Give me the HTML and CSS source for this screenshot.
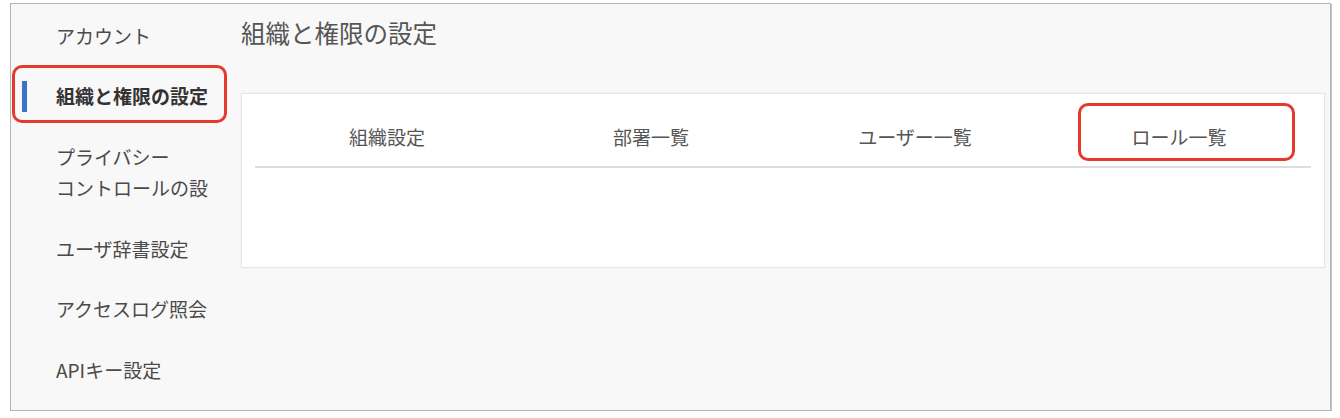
FILE: index.html
```html
<!DOCTYPE html>
<html lang="ja">
<head>
<meta charset="utf-8">
<title>組織と権限の設定</title>
<link rel="stylesheet" href="styles.css">
</head>
<body>
<div class="frame">
  <nav class="sidebar">
    <div class="nav-item">アカウント</div>
    <div class="nav-item active">組織と権限の設定</div>
    <div class="nav-item">プライバシー<br>コントロールの設</div>
    <div class="nav-item">ユーザ辞書設定</div>
    <div class="nav-item">アクセスログ照会</div>
    <div class="nav-item">APIキー設定</div>
  </nav>
  <main class="main">
    <h1 class="title">組織と権限の設定</h1>
    <section class="card">
      <div class="tabs">
        <div class="tab">組織設定</div>
        <div class="tab">部署一覧</div>
        <div class="tab">ユーザー一覧</div>
        <div class="tab marked">ロール一覧</div>
      </div>
    </section>
  </main>
</div>
</body>
</html>
```

FILE: styles.css
```css
* { box-sizing: border-box; }

html, body {
  margin: 0;
  background: #ffffff;
}

body {
  padding: 3px 9px 0 10px;
  font-family: "Noto Sans CJK JP", "Noto Sans", sans-serif;
  color: #555555;
}

.frame {
  display: flex;
  height: 408px;
  background: #f8f8f8;
  border: 1px solid #b4b4b4;
  box-shadow: 1px 1px 0 #c4c4c4;
}

.sidebar {
  width: 218px;
  flex: none;
  padding-top: 1px;
}

.nav-item {
  position: relative;
  padding: 14.8px 0 14.8px 45px;
  font-size: 19px;
  line-height: 31px;
  color: #4a4a4a;
  white-space: nowrap;
}

.nav-item.active {
  font-weight: bold;
  color: #333333;
}

.nav-item.active::before {
  content: "";
  position: absolute;
  left: 11px;
  top: 15px;
  width: 5px;
  height: 31px;
  background: #3b74c6;
}

.nav-item.active::after {
  content: "";
  position: absolute;
  left: 1px;
  right: 2px;
  top: -1px;
  bottom: 3px;
  border: 3px solid #e5392c;
  border-radius: 10px;
}

.main {
  flex: 1;
  padding: 13px 5px 0 12px;
}

.title {
  margin: 0;
  font-size: 24.5px;
  font-weight: normal;
  line-height: 32px;
  color: #555555;
}

.card {
  margin-top: 44px;
  height: 175px;
  background: #ffffff;
  border: 1px solid #e6e6e6;
  box-shadow: 0 0 2px rgba(0, 0, 0, 0.06);
  padding: 13px 13px 0 13px;
}

.tabs {
  display: grid;
  grid-template-columns: repeat(4, 1fr);
  border-bottom: 2px solid #dddddd;
}

.tab {
  position: relative;
  height: 59px;
  display: flex;
  align-items: center;
  justify-content: center;
  font-size: 19px;
  color: #555555;
}

.tab.marked::after {
  content: "";
  position: absolute;
  left: 31px;
  right: 16px;
  top: -4px;
  bottom: 5px;
  border: 3px solid #e5392c;
  border-radius: 10px;
}
```
